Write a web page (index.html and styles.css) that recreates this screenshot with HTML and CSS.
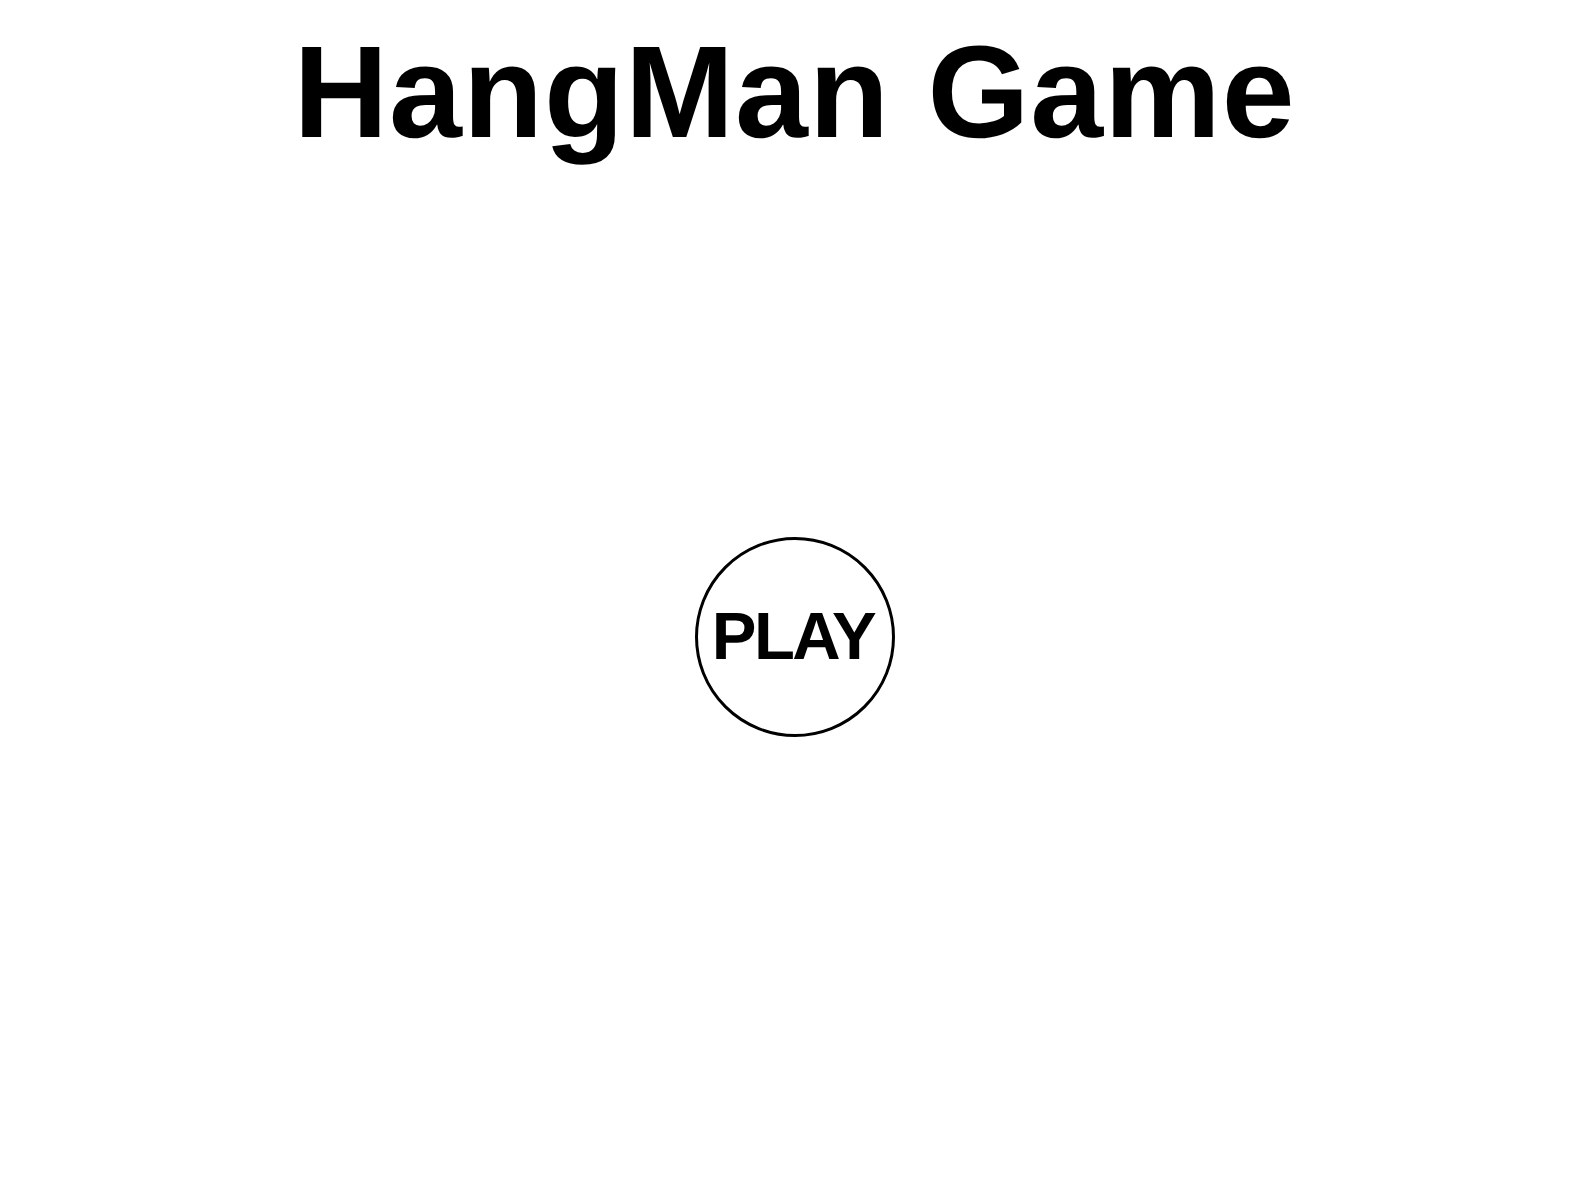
FILE: index.html
```html
<!DOCTYPE html>
<html lang="en">
<head>
<meta charset="utf-8">
<title>HangMan Game</title>
<link rel="stylesheet" href="styles.css">
</head>
<body>
<div class="page">
  <h1 class="title">HangMan Game</h1>
  <main class="stage">
    <button class="play-btn" type="button">PLAY</button>
  </main>
</div>
</body>
</html>
```

FILE: styles.css
```css
html, body {
  margin: 0;
  padding: 0;
  background: #ffffff;
}

.page {
  display: flex;
  flex-direction: column;
  align-items: center;
  min-height: 100vh;
  padding-left: 5px;
  box-sizing: border-box;
  font-family: "Liberation Sans", Arial, Helvetica, sans-serif;
  color: #000;
  text-rendering: geometricPrecision;
}

.title {
  margin: 0;
  padding-top: 17px;
  font-size: 131px;
  font-weight: 700;
  letter-spacing: 1px;
  line-height: 1.15;
}

.stage {
  display: flex;
  justify-content: center;
  padding-top: 369px;
}

.play-btn {
  box-sizing: border-box;
  width: 200px;
  height: 200px;
  border: 3px solid #000;
  border-radius: 50%;
  background: #fff;
  color: #000;
  font-family: "Liberation Sans", Arial, Helvetica, sans-serif;
  font-weight: 700;
  font-size: 67px;
  letter-spacing: -2.5px;
  line-height: normal;
  padding: 0 3px 0 0;
  cursor: pointer;
  text-rendering: geometricPrecision;
}
```
